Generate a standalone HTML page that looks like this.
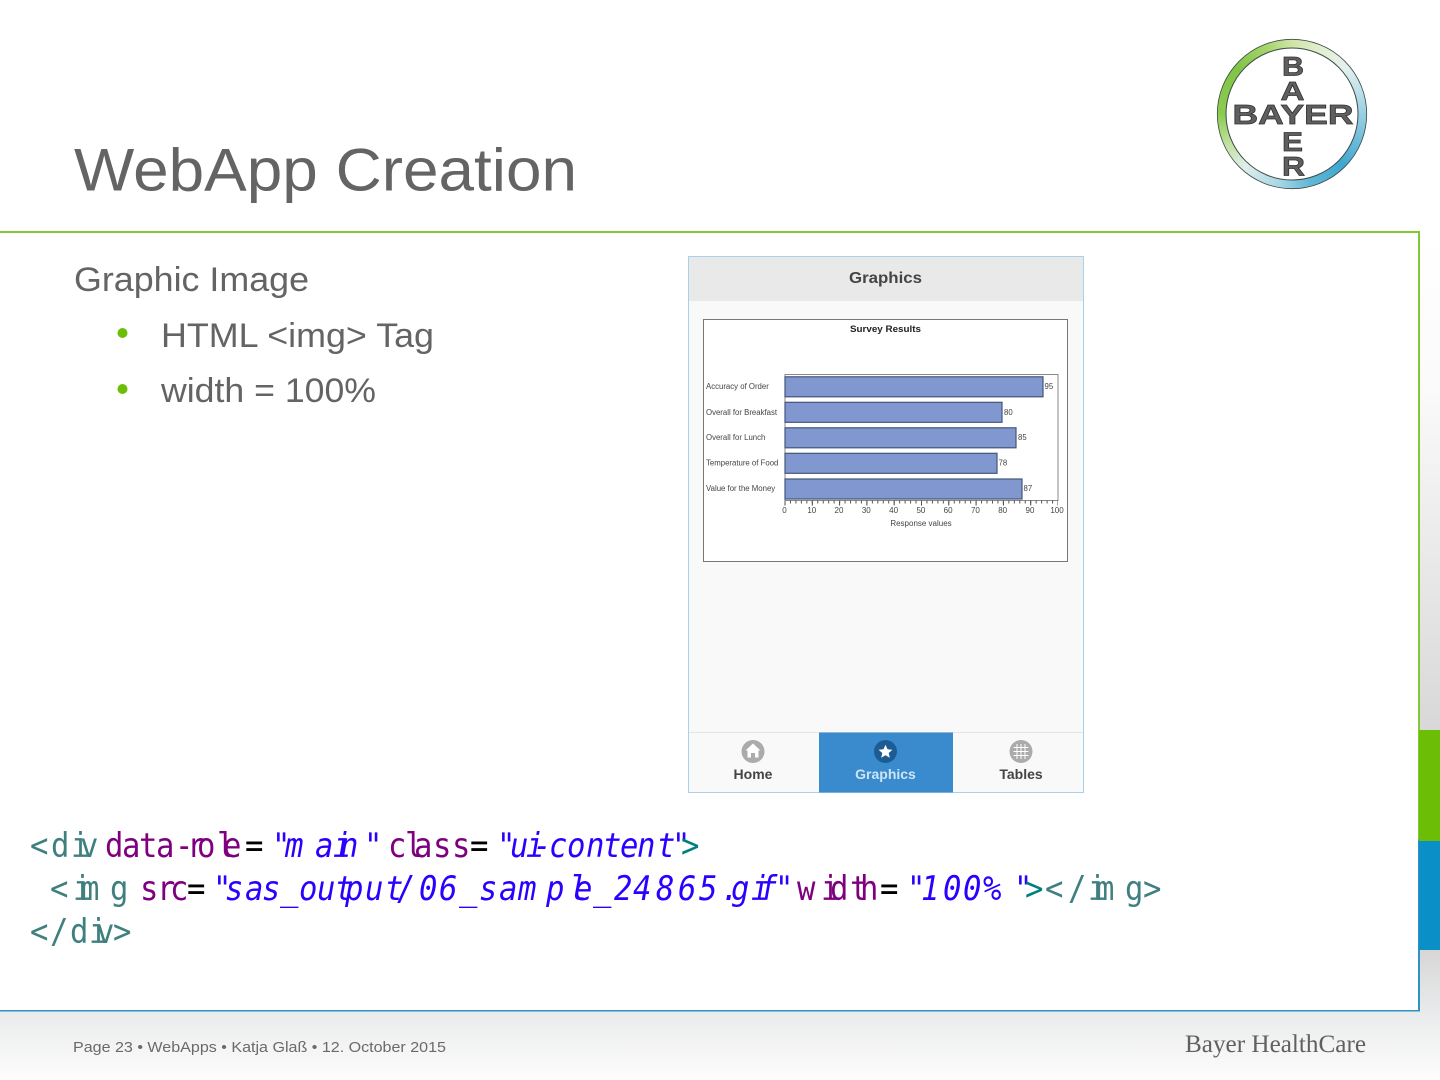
<!DOCTYPE html>
<html><head><meta charset="utf-8"><title>WebApp Creation</title>
<style>
html,body{margin:0;padding:0;background:#fff}
#p{position:relative;width:1440px;height:1080px;overflow:hidden;background:#fff}
#bg1{position:absolute;left:0;top:232px;width:1440px;height:498px;background:linear-gradient(#fff,#fbfbfb 30%,#d8d8d8)}
#bg2{position:absolute;left:0;top:950px;width:1440px;height:130px;background:linear-gradient(#d6d6d6,#e9eaeb 47%,#fdfdfd)}
#bg3{position:absolute;left:1419px;top:730px;width:21px;height:220px;background:#d8d8d8}
#ring{position:absolute;left:1217px;top:39px;width:150px;height:150px;border-radius:50%;background:conic-gradient(#cfe5a6 0deg,#e3efd2 25deg,#e4f0ee 50deg,#bcdfea 72deg,#86c6de 100deg,#3fa7d0 135deg,#62b6d6 165deg,#a6d6e4 190deg,#e0eeea 222deg,#c0e0a0 245deg,#8ccb50 270deg,#80c446 310deg,#a8d56e 340deg,#cfe5a6 360deg)}
svg{position:absolute;left:0;top:0}
text{font-family:"Liberation Sans",sans-serif}
#code text{font-family:"DejaVu Sans Mono",monospace;font-size:34px}
</style></head><body>
<div id="p">
<div id="bg1"></div><div id="bg2"></div><div id="bg3"></div>
<div id="ring"></div>
<svg width="1440" height="1080" viewBox="0 0 1440 1080" xmlns="http://www.w3.org/2000/svg">
<defs>
<linearGradient id="fr" x1="0" y1="0" x2="0" y2="1"><stop offset="0" stop-color="#82c734"/><stop offset=".78" stop-color="#82c734"/><stop offset=".78" stop-color="#2f92c4"/><stop offset="1" stop-color="#2f92c4"/></linearGradient>
</defs>
<!-- frame -->
<rect x="0" y="232" width="1419" height="778" fill="#fff"/>
<rect x="0" y="231" width="1420" height="2" fill="#82c734"/>
<rect x="1418" y="231" width="2" height="780" fill="url(#fr)"/>
<rect x="0" y="1010" width="1420" height="1.5" fill="#2f92c4"/>
<rect x="1419" y="730" width="21" height="111" fill="#6cbd05"/>
<rect x="1419" y="841" width="21" height="109" fill="#0a8fc6"/>

<!-- logo -->
<circle cx="1292" cy="114" r="66" fill="#fff" stroke="#3c4a44" stroke-width="1"/>
<circle cx="1292" cy="114" r="74.700" fill="none" stroke="#3c4a44" stroke-width=".8"/>
<g fill="#5f5f5f" stroke="#303030" stroke-width=".7" font-weight="700" text-anchor="middle">
<text x="1293" y="75.500" font-size="27" textLength="22" lengthAdjust="spacingAndGlyphs">B</text>
<text x="1292.500" y="100" font-size="26" textLength="24" lengthAdjust="spacingAndGlyphs">A</text>
<text x="1293" y="124" font-size="28" textLength="121" lengthAdjust="spacingAndGlyphs">BAYER</text>
<text x="1292.500" y="151" font-size="27" textLength="21" lengthAdjust="spacingAndGlyphs">E</text>
<text x="1293.500" y="175.500" font-size="27" textLength="23" lengthAdjust="spacingAndGlyphs">R</text>
</g>

<!-- title & body -->
<text x="74" y="190.500" font-size="60" fill="#646464" textLength="503" lengthAdjust="spacingAndGlyphs">WebApp Creation</text>
<text x="74" y="291" font-size="34" fill="#646464" textLength="235" lengthAdjust="spacingAndGlyphs">Graphic Image</text>
<circle cx="122.500" cy="333" r="5" fill="#6cbd05"/>
<text x="161" y="347" font-size="34" fill="#646464" textLength="273" lengthAdjust="spacingAndGlyphs">HTML &lt;img&gt; Tag</text>
<circle cx="122.500" cy="389" r="5" fill="#6cbd05"/>
<text x="161" y="402" font-size="34" fill="#646464" textLength="215" lengthAdjust="spacingAndGlyphs">width = 100%</text>

<!-- phone -->
<rect x="688.500" y="256.500" width="395" height="536" fill="#f9f9f9" stroke="#a9d2ea" stroke-width="1"/>
<rect x="689" y="257" width="394" height="44" fill="#e9e9e9"/>
<text x="885.500" y="283" font-size="16" font-weight="700" fill="#444" text-anchor="middle" textLength="73" lengthAdjust="spacingAndGlyphs">Graphics</text>
<!-- chart -->
<rect x="703.500" y="319.500" width="364" height="242" fill="#fff" stroke="#777" stroke-width="1"/>
<text x="885.500" y="332" font-size="9.500" font-weight="700" fill="#222" text-anchor="middle" textLength="71" lengthAdjust="spacingAndGlyphs">Survey Results</text>
<rect x="785" y="374.500" width="273" height="126" fill="#fff" stroke="#888" stroke-width="1"/>
<g fill="#8098cf" stroke="#44557a" stroke-width="1.200">
<rect x="785" y="376.800" width="258" height="20"/>
<rect x="785" y="402.300" width="217" height="20"/>
<rect x="785" y="427.800" width="231" height="20"/>
<rect x="785" y="453.300" width="212" height="20"/>
<rect x="785" y="479" width="237" height="20"/>
</g>
<g font-size="7.800" fill="#444">
<text x="706" y="389">Accuracy of Order</text>
<text x="706" y="415">Overall for Breakfast</text>
<text x="706" y="440">Overall for Lunch</text>
<text x="706" y="465.500">Temperature of Food</text>
<text x="706" y="491">Value for the Money</text>
<text x="1044.500" y="389">95</text>
<text x="1004" y="415">80</text>
<text x="1018" y="440">85</text>
<text x="998.500" y="465.500">78</text>
<text x="1023.500" y="491">87</text>
</g>
<line x1="784.500" y1="503" x2="1058" y2="503" stroke="#444" stroke-width="5" stroke-dasharray="1 26.300"/>
<line x1="784.500" y1="502" x2="1058" y2="502" stroke="#555" stroke-width="3" stroke-dasharray="1 4.460"/>
<g font-size="8" fill="#444" text-anchor="middle">
<text x="784.500" y="513">0</text><text x="811.800" y="513">10</text><text x="839" y="513">20</text><text x="866.300" y="513">30</text><text x="893.600" y="513">40</text><text x="920.900" y="513">50</text><text x="948.100" y="513">60</text><text x="975.400" y="513">70</text><text x="1002.700" y="513">80</text><text x="1030" y="513">90</text><text x="1057" y="513">100</text>
<text x="921" y="526">Response values</text>
</g>
<!-- tabs -->
<rect x="689" y="732" width="394" height="1" fill="#e4e4e4"/>
<rect x="819" y="732.500" width="134" height="60" fill="#3a8bcd"/>
<circle cx="753" cy="751.500" r="11.500" fill="#ababab"/>
<path d="M753 743.500 L745.500 750.500 H747.500 V757.500 H751 V753 H755 V757.500 H758.500 V750.500 H760.500 Z" fill="#fff"/>
<circle cx="885.500" cy="751.500" r="11.500" fill="#1d5c92"/>
<path d="M885.500 744.800 L887.500 749.300 L892.400 749.800 L888.700 753 L889.800 757.800 L885.500 755.300 L881.200 757.800 L882.300 753 L878.600 749.800 L883.500 749.300 Z" fill="#fff"/>
<circle cx="1021" cy="751.500" r="11.500" fill="#ababab"/>
<path d="M1017 744 V759 M1021 744 V759 M1025 744 V759 M1013.500 747.500 H1028.500 M1013.500 751.500 H1028.500 M1013.500 755.500 H1028.500" stroke="#fff" stroke-width="1" fill="none"/>
<g font-size="14" font-weight="700" text-anchor="middle">
<text x="753" y="779" fill="#444">Home</text>
<text x="885.500" y="779" fill="#cde4f6">Graphics</text>
<text x="1021" y="779" fill="#444">Tables</text>
</g>

<!-- code -->
<g id="code" transform="scale(.9,1)">
<text y="857" fill="#3f7f7f" x="33.300 56.700 78.900 88.900">&lt;div</text>
<text y="857" fill="#7f007f" x="116.700 135.600 154.400 173.300 194.400 207.800 218.900 241.100 247.800">data-role</text>
<text y="857" fill="#000" x="272.200">=</text>
<text y="857" font-style="italic" fill="#2a00ff" x="302.200 316.700 350 370 377.800 404.400">"main"</text>
<text y="857" fill="#7f007f" x="431.100 450 460 481.100 502.200">class</text>
<text y="857" fill="#000" x="522.200">=</text>
<text y="857" font-style="italic" fill="#2a00ff" x="552.200 566.700 584.400 592.200 610 630 651.100 670 688.900 707.800 730 746.700">"ui-content"</text>
<text y="857" fill="#007f7f" x="756.700">&gt;</text>

<text y="900" fill="#3f7f7f" x="55.600 81.100 90 122.200">&lt;img</text>
<text y="900" fill="#7f007f" x="155.600 174.400 188.900">src</text>
<text y="900" fill="#000" x="207.800">=</text>
<text y="900" font-style="italic" fill="#2a00ff" x="236.700 250 272.200 291.100 311.100 332.200 352.200 372.200 383.300 405.600 427.800 441.100 465.600 487.800 510 532.200 554.400 575.600 606.700 632.200 637.800 658.900 682.200 703.300 728.900 753.300 776.700 801.100 812.200 834.400 843.300 861.100">"sas_output/06_sample_24865.gif"</text>
<text y="900" fill="#7f007f" x="885.600 912.200 922.200 944.400 955.600">width</text>
<text y="900" fill="#000" x="977.800">=</text>
<text y="900" font-style="italic" fill="#2a00ff" x="1007.800 1023.300 1047.800 1070 1092.200 1126.700">"100%"</text>
<text y="900" fill="#007f7f" x="1138.900">&gt;</text>
<text y="900" fill="#3f7f7f" x="1161.100 1186.700 1208.900 1217.800 1250 1270">&lt;/img&gt;</text>

<text y="943" fill="#3f7f7f" x="33.300 55.600 77.800 98.900 106.700 125.600">&lt;/div&gt;</text>
</g>

<!-- footer -->
<text x="73" y="1052" font-size="14.700" fill="#6a6a6a" textLength="373" lengthAdjust="spacingAndGlyphs">Page 23 • WebApps • Katja Glaß • 12. October 2015</text>
<text x="1185" y="1052" font-size="25" fill="#606060" textLength="181" lengthAdjust="spacingAndGlyphs" style="font-family:'Liberation Serif',serif">Bayer HealthCare</text>
</svg>
</div>
</body></html>
